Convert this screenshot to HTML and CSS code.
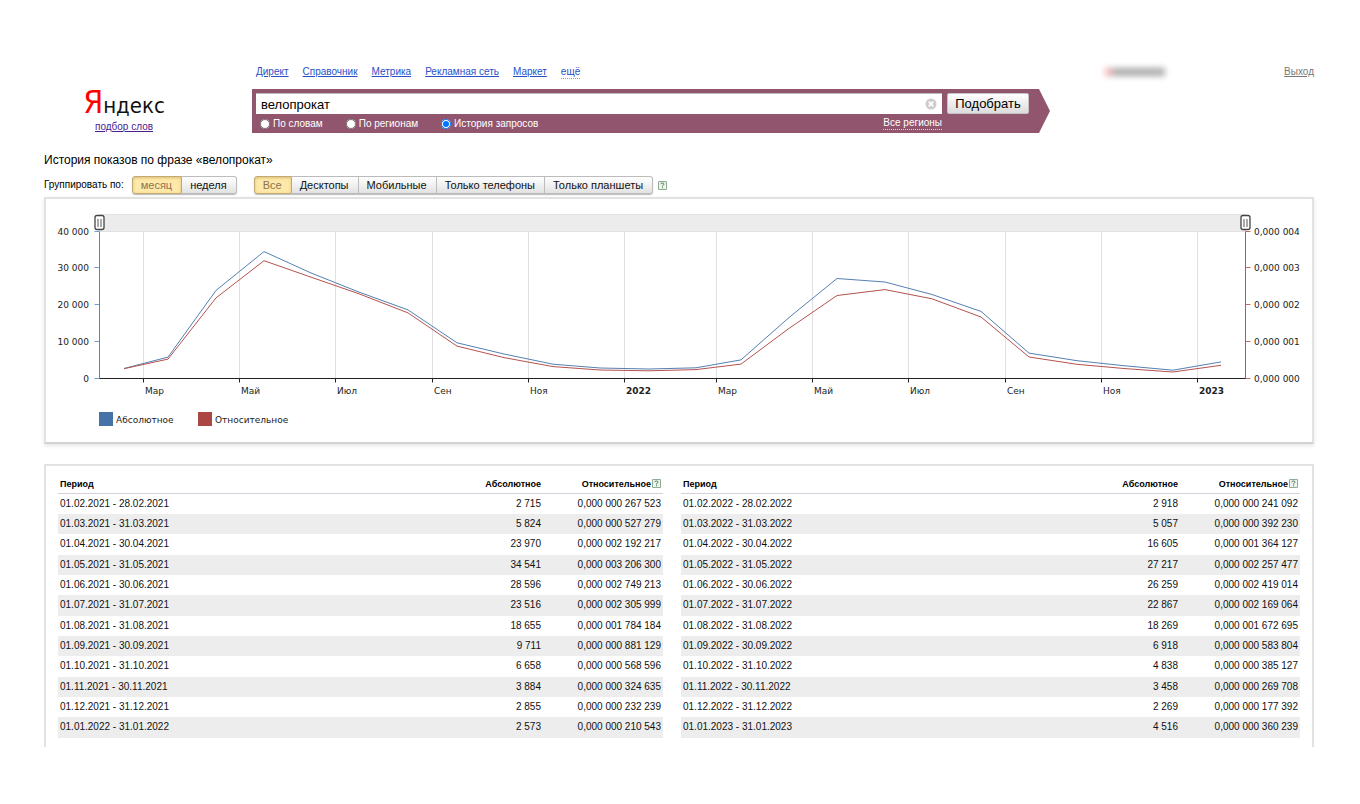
FILE: index.html
```html
<!DOCTYPE html>
<html lang="ru">
<head>
<meta charset="utf-8">
<title>Яндекс. Подбор слов</title>
<link rel="stylesheet" href="styles.css">
</head>
<body>
<header class="header">
  <div class="brand">
    <div class="logo"><span class="logo-ya">Я</span>ндекс</div>
    <a class="brand-link" href="#">подбор слов</a>
  </div>
  <div class="main">
    <nav class="nav">
      <a href="#">Директ</a><a href="#">Справочник</a><a href="#">Метрика</a><a href="#">Рекламная сеть</a><a href="#">Маркет</a><a class="more" href="#">ещё</a>
    </nav>
    <form class="search">
      <div class="field">
        <input class="query" type="text" value="велопрокат" aria-label="Запрос">
        <button class="clear" type="button" aria-label="Очистить">
          <svg width="12" height="12" viewBox="0 0 12 12"><circle cx="6" cy="6" r="5.5" fill="#ccc"/><path d="M3.7 3.7l4.6 4.6M8.3 3.7L3.7 8.3" stroke="#fff" stroke-width="1.7"/></svg>
        </button>
      </div>
      <button class="submit" type="button">Подобрать</button>
      <div class="options">
        <label><input type="radio" name="mode">По словам</label>
        <label><input type="radio" name="mode">По регионам</label>
        <label><input type="radio" name="mode" checked>История запросов</label>
        <a class="regions" href="#">Все регионы</a>
      </div>
    </form>
  </div>
  <div class="user">
    <span class="user-name"></span>
    <a class="logout" href="#">Выход</a>
  </div>
</header>

<h1 class="title">История показов по фразе «велопрокат»</h1>
<div class="filters">
  <span class="filters-label">Группировать по:</span>
  <div class="tabs">
    <button class="tab active" type="button">месяц</button><button class="tab" type="button">неделя</button>
  </div>
  <div class="tabs">
    <button class="tab active" type="button">Все</button><button class="tab" type="button">Десктопы</button><button class="tab" type="button">Мобильные</button><button class="tab" type="button">Только телефоны</button><button class="tab" type="button">Только планшеты</button>
  </div>
  <a class="help" href="#" aria-label="Помощь"><svg width="9" height="9" viewBox="0 0 9 9"><path d="M.5.5h8v8h-8z" fill="#eef4ee" stroke="#8fac93"/><path d="M2.8 3.2q0-1.2 1.6-1.2t1.6 1.1q0 .8-1.5 1.6v.8M4.5 6.3v1" fill="none" stroke="#55795a"/></svg></a>
</div>

<section class="panel chart-panel">
  <svg class="chart" id="chart" viewBox="0 0 1266 243"></svg>
</section>
<section class="panel data-panel">
  <table class="stats" id="first"></table>
  <table class="stats" id="second"></table>
</section>
<script src="script.js"></script>
</body>
</html>
```
FILE: styles.css
```css
* { box-sizing: border-box; }
body {
  margin: 0;
  padding: 64px 46px 56px 44px;
  background: #fff;
  color: #000;
  font: 10px/16px "Liberation Sans", Arial, sans-serif;
}
button, input { font-family: inherit; margin: 0; }
a { color: #2a50c8; }

.header { display: grid; grid-template-columns: 208px 1fr 264px; }
.brand { width: 160px; padding-top: 20px; text-align: center; }
.logo { height: 36px; font: 22px/36px "DejaVu Sans Condensed", "DejaVu Sans", sans-serif; color: #111; }
.logo-ya { color: #f00; font-size: 32px; }
.brand-link { display: block; line-height: 14px; color: #4b1d8f; }

.nav { display: flex; gap: 14px; padding-left: 4px; margin-bottom: 9px; }
.nav .more { text-decoration: none; border-bottom: 1px dotted #6f9be0; height: 15px; }
.search {
  display: grid;
  grid-template-columns: 1fr 82px;
  gap: 0 5px;
  padding: 4px 21px 0 4px;
  height: 44px;
  background: #91566e;
  clip-path: polygon(0 0, calc(100% - 11px) 0, 100% 50%, calc(100% - 11px) 100%, 0 100%);
}
.field { display: flex; align-items: center; height: 21px; background: #fff; border-top: 1px solid #bbb; padding: 0 5px; }
.query { flex: 1; border: 0; padding: 0; background: none; font-size: 13px; outline: 0; color: #000; }
.clear { border: 0; padding: 0; background: none; display: flex; }
.submit {
  height: 21px;
  padding: 0;
  border: 1px solid #c9c2c5;
  border-radius: 2px;
  background: linear-gradient(#fff, #dcdcdc);
  font-size: 13px;
  color: #000;
}
.options { display: flex; align-items: center; height: 18px; padding-left: 4px; color: #fff; gap: 23px; }
.options label { display: flex; align-items: center; gap: 3px; }
.options input { width: 10px; height: 10px; }
.regions { margin-left: auto; color: #fff; text-decoration: none; line-height: 12px; border-bottom: 1px dotted #e3d0d9; }

.user { display: flex; justify-content: space-between; align-items: flex-start; padding-left: 55px; }
.user-name { width: 60px; height: 8px; margin-top: 4px; background: linear-gradient(90deg, #f5b5b5 10%, #aaa 14%); filter: blur(3px); }
.logout { color: #777; }

.title { margin: 18px 0 8px; font-size: 12px; line-height: 16px; font-weight: 400; }
.filters { display: flex; align-items: center; height: 18px; margin-bottom: 3px; }
.filters-label { margin-right: 8px; }
.tabs { display: flex; margin-right: 17px; border-radius: 3px; box-shadow: 0 1px 1px #bbb; }
.tab {
  height: 18px;
  padding: 0 9px 0 8px;
  border: 1px solid #bcbcbc;
  border-left-width: 0;
  background: linear-gradient(#fff, #e2e2e2);
  font-size: 11px;
  line-height: 16px;
  color: #111;
}
.tab:last-child { border-radius: 0 3px 3px 0; }
.tab.active { border: 1px solid #c2aa72; border-radius: 3px 0 0 3px; background: #ffe9a8; box-shadow: inset 0 1px 3px #d8bd78; color: #8b7355; }
.help { display: inline-flex; vertical-align: -1px; }
.filters .help { margin-left: -12px; }

.panel { border: 2px solid #e2e2e2; }
.chart-panel { margin-bottom: 20px; border-bottom-color: #d2d2d2; box-shadow: 0 2px 4px #e6e6e6; }
.chart { display: block; width: 100%; font: 9px "DejaVu Sans", Verdana, sans-serif; fill: #222; }

.data-panel { display: grid; grid-template-columns: 605fr 619fr; gap: 18px; padding: 11px 12px 9px; border-bottom: 0; }
.stats { width: 100%; border-collapse: collapse; table-layout: fixed; }
.stats th { height: 16px; padding: 0 2px; border-bottom: 1px solid #d5d0dc; font-size: 9px; line-height: 15px; white-space: nowrap; }
.stats td { height: 20px; padding: 0 2px; line-height: 20px; color: #111; }
.stats tr:nth-child(3n) td { height: 21px; }
.stats tbody tr:nth-child(even) { background: #ededed; }
.stats th, .stats td { text-align: right; }
.stats th:first-child, .stats td:first-child { text-align: left; }
.stats th:nth-child(2), .stats th:nth-child(3) { width: 120px; }
.stats .help { margin-left: 1px; }
```
FILE: script.js
```js
const data = [
  ["01.02.2021 - 28.02.2021", 2715, 267523, 124], ["01.03.2021 - 31.03.2021", 5824, 527279, 168],
  ["01.04.2021 - 30.04.2021", 23970, 2192217, 216], ["01.05.2021 - 31.05.2021", 34541, 3206300, 264],
  ["01.06.2021 - 30.06.2021", 28596, 2749213, 312], ["01.07.2021 - 31.07.2021", 23516, 2305999, 359],
  ["01.08.2021 - 31.08.2021", 18655, 1784184, 408], ["01.09.2021 - 30.09.2021", 9711, 881129, 457],
  ["01.10.2021 - 31.10.2021", 6658, 568596, 504], ["01.11.2021 - 30.11.2021", 3884, 324635, 553],
  ["01.12.2021 - 31.12.2021", 2855, 232239, 600], ["01.01.2022 - 31.01.2022", 2573, 210543, 649],
  ["01.02.2022 - 28.02.2022", 2918, 241092, 696], ["01.03.2022 - 31.03.2022", 5057, 392230, 741],
  ["01.04.2022 - 30.04.2022", 16605, 1364127, 789], ["01.05.2022 - 31.05.2022", 27217, 2257477, 837],
  ["01.06.2022 - 30.06.2022", 26259, 2419014, 885], ["01.07.2022 - 31.07.2022", 22867, 2169064, 932],
  ["01.08.2022 - 31.08.2022", 18269, 1672695, 981], ["01.09.2022 - 30.09.2022", 6918, 583804, 1029],
  ["01.10.2022 - 31.10.2022", 4838, 385127, 1077], ["01.11.2022 - 30.11.2022", 3458, 269708, 1125],
  ["01.12.2022 - 31.12.2022", 2269, 177392, 1173], ["01.01.2023 - 31.01.2023", 4516, 360239, 1221]
];
const group = s => String(s).replace(/\B(?=(\d{3})+$)/g, " ");
const share = n => "0," + group(String(n).padStart(12, "0"));
const help = document.querySelector(".filters .help").outerHTML;

function fill(id, rows) {
  document.getElementById(id).innerHTML =
    `<thead><tr><th>Период</th><th>Абсолютное</th><th>Относительное${help}</th></tr></thead><tbody>` +
    rows.map(r => `<tr><td>${r[0]}</td><td>${group(r[1])}</td><td>${share(r[2])}</td></tr>`).join("") + "</tbody>";
}
fill("first", data.slice(0, 12));
fill("second", data.slice(12));

const X = x => x - 46;
const bottom = 179.5, top0 = 32.5, H = bottom - top0;
const line = (x1, y1, x2, y2, c) => `<path d="M${x1} ${y1}L${x2} ${y2}" stroke="${c}"/>`;
const L = 53.5, R = 1199.5;
let s = `<path d="M${L} 15.5H${R}V32.5H${L}z" fill="#ececec" stroke="#e2e2e2"/>`;
const ticks = [[143, "Мар"], [239, "Май"], [335, "Июл"], [432, "Сен"], [528, "Ноя"], [624, "2022"], [716, "Мар"],
  [812, "Май"], [908, "Июл"], [1005, "Сен"], [1101, "Ноя"], [1197, "2023"]];
for (const [x, t] of ticks) {
  const p = X(x) + 0.5;
  s += line(p, 33, p, bottom, "#e0e0e0") + line(p, bottom, p, bottom + 4, "#222");
  s += `<text x="${X(x) + 2}" y="195"${t[0] === "2" ? ' font-weight="bold"' : ""}>${t}</text>`;
}
for (let i = 0; i <= 4; i++) {
  const y = Math.round(bottom - i * H / 4) - 0.5;
  s += line(L - 5, y, L, y, "#7b9cc4") + line(R, y, R + 5, y, "#c56b6b");
  s += `<text x="43" y="${y + 3}" text-anchor="end">${i ? i + "0 000" : "0"}</text>`;
  s += `<text x="1208" y="${y + 3}">0,000 00${i}</text>`;
}
s += line(L, top0, L, bottom, "#5c84b5") + line(R, top0, R, bottom, "#b85656") + line(L, bottom, R, bottom, "#222");
const plot = (i, max, c) => `<polyline fill="none" stroke="${c}" points="${data.map(r => X(r[3]) + "," + (bottom - r[i] / max * H).toFixed(1)).join(" ")}"/>`;
s += plot(1, 40000, "#5580b2") + plot(2, 4000000, "#b5524f");
for (const x of [L, R]) {
  s += `<rect x="${x - 4.5}" y="16.5" width="9" height="14" rx="2" fill="#fff" stroke="#444" stroke-width="1.3"/>` +
    line(x - 1.5, 20, x - 1.5, 28, "#555") + line(x + 1.5, 20, x + 1.5, 28, "#555");
}
s += `<rect x="53" y="213" width="14" height="14" fill="#4572a7"/><text x="70" y="224">Абсолютное</text>`;
s += `<rect x="152" y="213" width="14" height="14" fill="#aa4643"/><text x="169" y="224">Относительное</text>`;
document.getElementById("chart").innerHTML = s;
```
